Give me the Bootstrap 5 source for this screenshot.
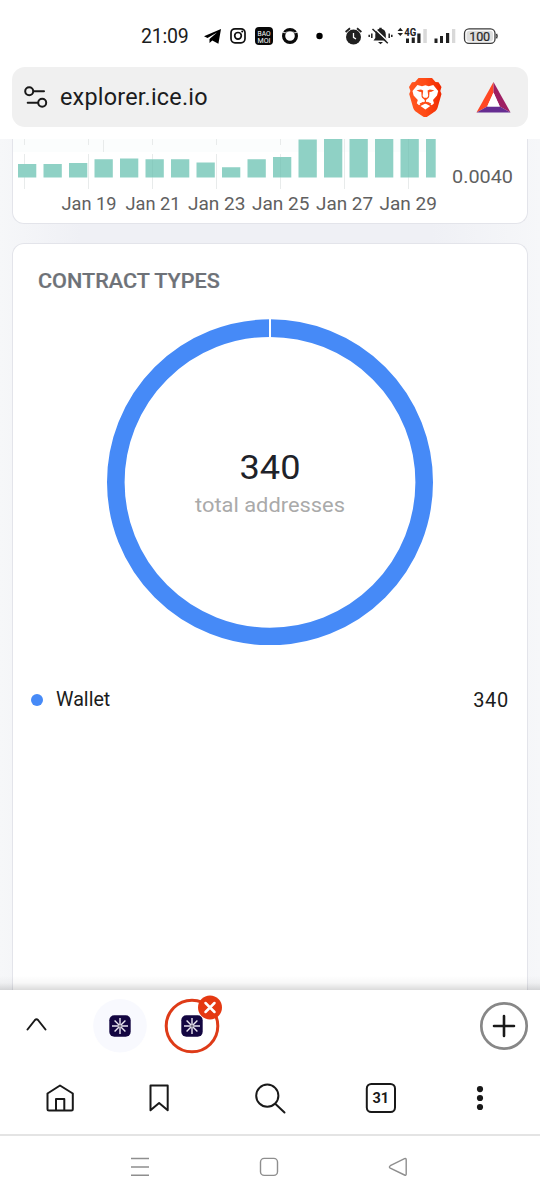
<!DOCTYPE html>
<html lang="en">
<head>
<meta charset="utf-8">
<meta name="viewport" content="width=device-width, initial-scale=1">
<title>explorer.ice.io</title>
<link href="https://cdn.jsdelivr.net/npm/bootstrap@5.3.0/dist/css/bootstrap.min.css" rel="stylesheet">
<style>
body{width:540px;height:1200px;overflow:hidden;background:#fff;font-family:Roboto,"Liberation Sans",sans-serif;color:#1b1c20}
svg{display:block;flex:none}
.status{height:67px;padding-left:141px}
.status svg{height:60px}
.clock{width:59px;height:60px;line-height:73px;font-size:19.5px;letter-spacing:-.2px;white-space:nowrap}
.omnibox{height:60px;margin:0 12px;border-radius:13px;background:#f0f0f0}
.address{font-size:23.4px;padding-top:2px;letter-spacing:.22px}
.bat{margin:0 17px 0 34px}
.viewport{height:851px;margin-top:12px;padding:0 12px;background:linear-gradient(90deg,#f6f7f9,#eff0f5 15%,#eff0f5 80%,#f6f7f9)}
.panel{border:1px solid #e3e4ea;background:#fff}
.panel-chart{height:85px;border-top:0;border-radius:0 0 12px 12px}
.panel-types{height:747px;margin-top:19px;border-bottom:0;border-radius:12px 12px 0 0}
.heading{width:max-content;font-size:19.5px;line-height:24px;font-weight:500;color:#6e7278;margin:26px 0 0 25px;transform:scaleX(1.108);transform-origin:left;-webkit-text-stroke:.2px #6e7278}
.donut{width:326px;height:326px;margin:25px auto 0}
.legend-row{font-size:20px;line-height:24px;margin:42px 18px 0 18px}
.legend-name{font-size:19.7px;padding:1px 0 0 1px}
.legend-value{letter-spacing:.7px}
.swatch{width:12px;height:12px;background:#468af7}
.edge{height:14px;margin:-14px -12px 0;position:relative;background:linear-gradient(#0000,#00000008 50%,#00000024)}
.tabstrip{height:72px}
.toolbar{height:74px;border-bottom:2px solid #e4e4e4}
.sysnav{height:64px}
.ln{fill:none;stroke:#191919;stroke-width:2;stroke-linecap:round;stroke-linejoin:round}
</style>
</head>
<body class="d-flex flex-column">
<header>
<div class="status d-flex align-items-start">
  <span class="clock">21:09</span>
  <svg width="130" viewBox="200 0 130 60">
    <path d="M204 36.2L221 29L218.4 43.7L212.3 40.5L209.5 43V39L217 32.5L207.5 38Z"/>
    <g fill="none" stroke="#111" stroke-width="1.7"><rect x="231" y="28.8" width="14" height="14" rx="4"/><circle cx="238" cy="35.8" r="3.3"/></g><circle cx="242.2" cy="31.6" r="1"/>
    <rect x="255" y="27" width="18" height="18" rx="4" fill="#080808"/>
    <g fill="#fff" font-size="7.8" text-anchor="middle"><text x="264" y="35.5" textLength="13" lengthAdjust="spacingAndGlyphs">BAO</text><text x="264" y="42.7" textLength="13" lengthAdjust="spacingAndGlyphs">MOI</text></g>
    <circle cx="290" cy="36" r="6.4" fill="none" stroke="#0a0a0a" stroke-width="3.2"/><path d="M282.5 32L285.5 33L287 31.5M297.5 32L294.5 33L293 31.5" fill="none" stroke="#fff" stroke-width=".9"/>
    <circle cx="319.5" cy="36" r="3.2"/>
  </svg>
  <svg width="170" viewBox="330 0 170 60">
    <g fill="#202020"><circle cx="353.5" cy="37" r="7.5"/><path d="M345.6 32L350 28.2M357 28.2L361.4 32" stroke="#202020" stroke-width="1.8"/><path d="M353.5 33V37.3L356 39" fill="none" stroke="#fff" stroke-width="1.3"/>
    <path d="M373.5 40.5L375.3 38V34.5C375.3 31.3 377 29.3 379.3 28.8V27.8H381.7V28.8C384 29.3 385.8 31.3 385.8 34.5V38L387.5 40.5ZM378 42H383L380.5 44.2Z"/><path d="M374 28L389 42.2" stroke="#fff" stroke-width="1.4"/><path d="M372.5 29L387.8 43.3M371.8 33.5V38M369.2 34.7V37M389.2 33.5V38M391.8 34.7V37" stroke="#202020" stroke-width="1.5"/>
    <path d="M397.5 31L400.3 27.8L403 31ZM397.5 33L400.3 36L403 33Z"/>
    <path d="M406 38.5H409V43H406ZM411.7 37.5H414.8V43H411.7ZM417.3 33.5H420.5V43H417.3ZM434.5 38.5H437.5V43H434.5ZM440 36H443V43H440ZM446 33H449.2V43H446Z"/><text x="404.2" y="35.8" font-size="11" font-weight="700" textLength="12" lengthAdjust="spacingAndGlyphs">4G</text></g>
    <path d="M423.3 29H426.8V43H423.3ZM452 29H455.3V43H452Z" fill="#d9d9d9"/>
    <rect x="464.5" y="28.8" width="30.5" height="14.6" rx="4.5" fill="#fff" stroke="#3b3b3b" stroke-width="1.3"/><rect x="466.5" y="30.8" width="26.5" height="10.6" rx="3" fill="#dedede"/><path d="M496.5 33.8Q497.8 36 496.5 38.4" fill="none" stroke="#3b3b3b" stroke-width="1.5"/>
    <text x="469.2" y="40.5" font-size="12.6" fill="#292929" stroke="#292929" stroke-width=".2" textLength="21">100</text>
  </svg>
</div>
<div class="omnibox d-flex align-items-center">
  <svg class="ms-2 me-1" width="36" height="28" viewBox="-2 -1 36 28"><g class="ln"><circle cx="7.2" cy="7.2" r="4"/><path d="M12 7.2H22M5.7 18.8H15.5"/><circle cx="20.2" cy="18.8" r="4"/></g></svg>
  <span class="address me-auto">explorer.ice.io</span>
  <svg width="33" height="39" viewBox="0 0 33 39">
    <defs><linearGradient id="mane"><stop stop-color="#ff5722"/><stop offset=".5" stop-color="#ff4b16"/><stop offset="1" stop-color="#f02800"/></linearGradient></defs>
    <path d="M9.5 0H23L26.5 4L29.5 4.2L32.5 9L31.3 13L32.5 16L28.5 30C27.7 32.5 25.3 34 23 35.5L18.5 38.4Q16.3 39.7 14 38.4L9.5 35.5C7.2 34 5 32.5 4.2 30L.2 16L1.4 13L0 9L3 4.2L6 4Z" fill="url(#mane)"/>
    <path d="M8.4 7L13 8.2L16.4 7.3L19.8 8.2L24.3 7L29.2 13L28 17.5L24 22L25 25.3L22.8 27.2L18.8 24.6L16.4 23.5L14 24.6L10 27.2L7.8 25.3L8.8 22L4.6 17.5L3.5 13Z" fill="#fff"/><path d="M11.5 28L16.4 25.4L21.3 28L16.4 31.6Z" fill="#fff"/>
    <path d="M7.5 12.2L12 11.5L14.2 12.5L13.6 18L15 19.7H18L19.2 18L18.6 12.5L20.8 11.5L25.3 12.2L22.5 13.8L20.5 14L20.2 18.5L19.7 19.7L16.4 22.5L13.1 19.7L12.6 18.5L12.3 14L10.3 13.8Z" fill="#ff4b16"/><path d="M16.4 21V25.5M14.5 24.3L11 26M18.3 24.3L22 26" stroke="#ff4b16" stroke-width="1.3"/>
    <path d="M14.8 12H18L17.6 19H15.2Z" fill="#fff"/>
  </svg>
  <svg class="bat" width="35" height="31" viewBox="0 0 35 31"><path d="M17.5 0V10.5L11.2 24.5L.5 30.5Z" fill="#ff4724"/><path d="M17.5 0L34.5 30.5L23.8 24.5L17.5 10.5Z" fill="#9e1f63"/><path d="M.5 30.5L11.2 24.5H23.8L34.5 30.5Z" fill="#662d91"/><path d="M17.5 10.5L11.2 24.5H23.8Z" fill="#fff"/></svg>
</div>
</header>
<main class="viewport">
  <section class="panel panel-chart overflow-hidden">
    <svg width="512" height="84" viewBox="13 139 512 84">
      <path d="M13 139H436V152H13Z" fill="#fbfdfd"/>
      <path d="M24.5 139V145M24.5 154V189M88.5 139V145M88.5 154V189M152.5 139V145M152.5 154V189M216.5 139V145M216.5 154V189M280.5 139V145M280.5 154V189M344.5 139V189M408.5 139V189M103.5 140V152" stroke="#e8ebeb"/>
      <path fill="#8fd1c5" d="M18 164h18.3v13.5H18ZM43.5 164h18.3v13.5H43.5ZM69 163h18.3v14.5H69ZM94.5 159.3h18.3v18.2H94.5ZM120 158.5h18.3v19H120ZM145.5 159.3h18.3v18.2H145.5ZM171 159.3h18.3v18.2H171ZM196.5 162.5h18.3v15H196.5ZM222 167.3h18.3v10.2H222ZM247.5 159.3h18.3v18.2H247.5ZM273 157h18.3v20.5H273ZM298.5 139.5h18.3v38H298.5ZM324 139h18.3v38.5H324ZM349.5 139h18.3v38.5H349.5ZM375 139h18.3v38.5H375ZM400.5 139h18.3v38.5H400.5ZM426 139h9.7v38.5H426Z"/>
      <path d="M152.5 160V177M280.5 158V177M408.5 139V177" stroke="#89cbbf"/>
      <g fill="#606060" font-size="18.3">
        <text x="61.5" y="210" textLength="55" lengthAdjust="spacingAndGlyphs">Jan 19</text><text x="125.5" y="210" textLength="55" lengthAdjust="spacingAndGlyphs">Jan 21</text><text x="188" y="210" textLength="57.5" lengthAdjust="spacingAndGlyphs">Jan 23</text><text x="252" y="210" textLength="57.5" lengthAdjust="spacingAndGlyphs">Jan 25</text><text x="316" y="210" textLength="57" lengthAdjust="spacingAndGlyphs">Jan 27</text><text x="379.5" y="210" textLength="57.5" lengthAdjust="spacingAndGlyphs">Jan 29</text>
        <text x="452" y="182.7" textLength="61" lengthAdjust="spacingAndGlyphs">0.0040</text>
      </g>
    </svg>
  </section>
  <section class="panel panel-types overflow-hidden">
    <h2 class="heading">CONTRACT TYPES</h2>
    <svg class="donut" viewBox="107 319.2 326 326">
      <circle cx="270" cy="482.5" r="154.2" fill="none" stroke="#468af7" stroke-width="17.6"/><path d="M270 319V338" stroke="#fff" stroke-width="2"/>
      <text x="239.5" y="479.3" font-size="33.8" fill="#1e2229" textLength="61" lengthAdjust="spacingAndGlyphs">340</text>
      <text x="195" y="512.7" font-size="20.3" fill="#aaa" textLength="150" lengthAdjust="spacingAndGlyphs">total addresses</text>
    </svg>
    <div class="legend-row d-flex align-items-center"><span class="swatch rounded-circle"></span><span class="ms-2 ps-1 me-auto"><span class="legend-name d-block">Wallet</span></span><span class="legend-value">340</span></div>
  </section>
  <div class="edge"></div>
</main>
<footer>
  <svg class="tabstrip" width="540" height="72" viewBox="0 990 540 72">
    <defs><g id="favicon"><rect x="-10.7" y="-10.7" width="21.4" height="21.4" rx="5" fill="#130641"/><path d="M0-8V8M-8 0H8M-5.4-5.4L5.4 5.4M5.4-5.4L-5.4 5.4" stroke="#e8e5ef" stroke-width="1.4"/><circle r="1.6" fill="#777184"/></g></defs>
    <path class="ln" d="M27.5 1029.5L35 1020Q36.5 1018.5 38 1020L45.5 1029.5"/>
    <circle cx="120" cy="1025.7" r="26.8" fill="#f8f9fe"/><use href="#favicon" x="120" y="1026"/>
    <circle cx="192" cy="1026" r="25.8" fill="#fff" stroke="#de3b18" stroke-width="3"/><use href="#favicon" x="192" y="1026"/>
    <circle cx="210" cy="1007.5" r="12" fill="#e53912"/><path d="M205.5 1003L214.5 1012M214.5 1003L205.5 1012" stroke="#fff" stroke-width="2.5" stroke-linecap="round"/>
    <circle cx="504" cy="1026" r="22.7" fill="none" stroke="#878787" stroke-width="2.7"/><path class="ln" d="M494 1026H514M504 1016V1036" style="stroke-width:2.6px"/>
  </svg>
  <nav class="toolbar">
    <svg width="540" height="72" viewBox="0 1062 540 72">
      <path class="ln" d="M47.5 1093.5L60 1085.5L72.8 1093.5V1109Q72.8 1110.5 71.3 1110.5H49Q47.5 1110.5 47.5 1109ZM56 1110.5V1099H64.3V1110.5"/>
      <path class="ln" d="M150.5 1085.5H167.7V1110.3L159.1 1103L150.5 1110.3Z"/>
      <g class="ln"><circle cx="267.3" cy="1095.7" r="11.1"/><path d="M275.5 1104L284.5 1112.5"/></g>
      <rect class="ln" x="366.8" y="1084" width="28.2" height="28" rx="4.5"/><text x="380.8" y="1103" text-anchor="middle" font-size="14.5" font-weight="700" fill="#191919">31</text>
      <g fill="#191919"><circle cx="480" cy="1089.1" r="3.1"/><circle cx="480" cy="1098" r="3.1"/><circle cx="480" cy="1107" r="3.1"/></g>
    </svg>
  </nav>
  <svg class="sysnav" width="540" height="64" viewBox="0 1136 540 64" fill="none" stroke="#8e8e8e" stroke-width="1.4"><path d="M131 1158.5H149M131 1167H149M131 1175.3H149"/><rect x="260.5" y="1158.4" width="17" height="17" rx="3.7"/><path d="M390.3 1165.7L404.5 1158.6Q406.2 1158 406.2 1159.8V1174Q406.2 1175.8 404.5 1175L390.3 1168.2Q388.5 1167 390.3 1165.7Z"/></svg>
</footer>
</body>
</html>
